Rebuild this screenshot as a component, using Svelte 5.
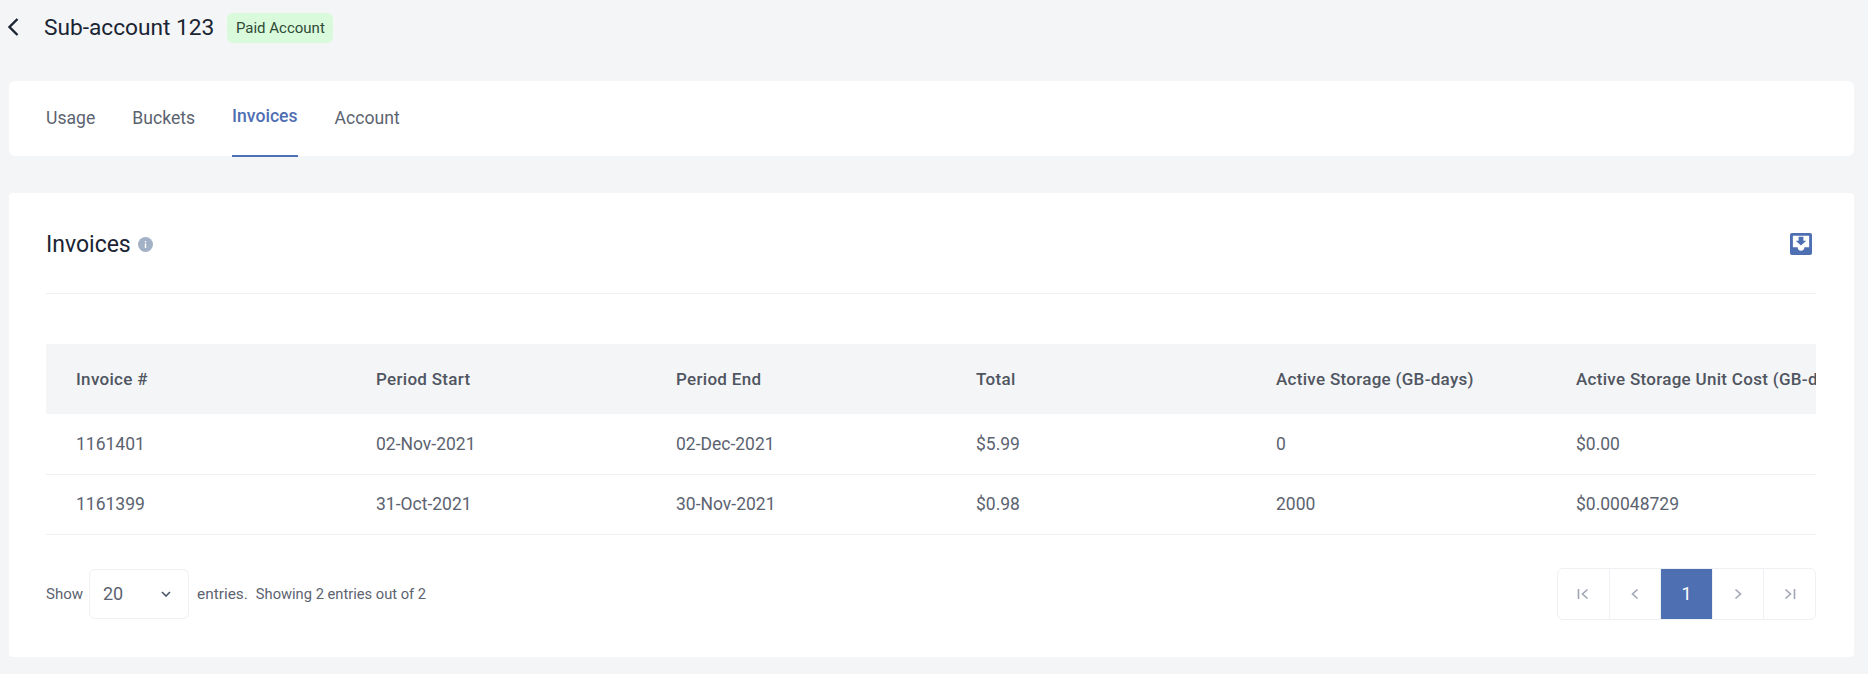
<script>
	const columns = ['Invoice #', 'Period Start', 'Period End', 'Total', 'Active Storage (GB-days)', 'Active Storage Unit Cost (GB-days)'];
	const rows = [
		['1161401', '02-Nov-2021', '02-Dec-2021', '$5.99', '0', '$0.00'],
		['1161399', '31-Oct-2021', '30-Nov-2021', '$0.98', '2000', '$0.00048729']
	];
	const tabs = ['Usage', 'Buckets', 'Invoices', 'Account'];
	let active = 'Invoices';
</script>

<div class="page">
	<header class="top">
		<svg class="back" width="14" height="20" viewBox="0 0 14 20"><path d="M11.5 2 L3.5 10 L11.5 18" fill="none" stroke="#1a2433" stroke-width="2.4" /></svg>
		<h1>Sub-account 123</h1>
		<span class="badge">Paid Account</span>
	</header>

	<nav class="tabs">
		{#each tabs as tab}
			<span class="tab" class:active={tab === active}>{tab}</span>
		{/each}
	</nav>

	<section class="card">
		<div class="card-head">
			<div class="title">
				<h2>Invoices</h2>
				<svg width="15" height="15" viewBox="0 0 15 15"><circle cx="7.5" cy="7.5" r="7.5" fill="#a3b1c6" /><rect x="6.8" y="6.4" width="1.4" height="4.6" fill="#fff" /><rect x="6.8" y="4" width="1.4" height="1.4" fill="#fff" /></svg>
			</div>
			<svg class="download" width="22" height="22" viewBox="0 0 23 23">
				<path fill="#4f6fb3" fill-rule="evenodd" d="M2 0 H21 A2 2 0 0 1 23 2 V21 A2 2 0 0 1 21 23 H2 A2 2 0 0 1 0 21 V2 A2 2 0 0 1 2 0 Z M3 3 V15 H8 A3.5 3.5 0 0 0 15 15 H20 V3 Z" />
				<path fill="#4f6fb3" d="M9 4 H14 V8 H17 L11.5 13 L6 8 H9 Z" />
			</svg>
		</div>

		<div class="table-wrap">
			<table>
				<thead>
					<tr>{#each columns as c}<th>{c}</th>{/each}</tr>
				</thead>
				<tbody>
					{#each rows as row}
						<tr>{#each row as cell}<td>{cell}</td>{/each}</tr>
					{/each}
				</tbody>
			</table>
		</div>

		<div class="footer">
			<div class="entries">
				<span>Show</span>
				<div class="select">
					<span>20</span>
					<svg width="10" height="6" viewBox="0 0 10 6"><path d="M1 1 L5 5 L9 1" fill="none" stroke="#4a5568" stroke-width="1.6" /></svg>
				</div>
				<span class="entries-word">entries.</span>
				<span class="showing">Showing 2 entries out of 2</span>
			</div>
			<div class="pager">
				<span class="page-btn"><svg width="12" height="12" viewBox="0 0 12 12"><path d="M1.5 1 V11 M10.5 1.5 L5.5 6 L10.5 10.5" fill="none" stroke="#a0a6b3" stroke-width="1.6" /></svg></span>
				<span class="page-btn"><svg width="8" height="12" viewBox="0 0 8 12"><path d="M6.5 1.5 L1.5 6 L6.5 10.5" fill="none" stroke="#a0a6b3" stroke-width="1.6" /></svg></span>
				<span class="page-btn current">1</span>
				<span class="page-btn"><svg width="8" height="12" viewBox="0 0 8 12"><path d="M1.5 1.5 L6.5 6 L1.5 10.5" fill="none" stroke="#a0a6b3" stroke-width="1.6" /></svg></span>
				<span class="page-btn"><svg width="12" height="12" viewBox="0 0 12 12"><path d="M10.5 1 V11 M1.5 1.5 L6.5 6 L1.5 10.5" fill="none" stroke="#a0a6b3" stroke-width="1.6" /></svg></span>
			</div>
		</div>
	</section>
</div>

<style>
	:global(body) { margin: 0; background: #f4f5f7; font-family: Roboto, "Liberation Sans", sans-serif; color: #4a5568; }
	.page { padding: 0 14px 17px 9px; height: 674px; box-sizing: border-box; overflow: hidden; }
	.top { height: 54px; display: flex; align-items: center; }
	.back { margin-left: -3px; margin-right: 24px; }
	h1 { margin: 0; font-size: 22.7px; font-weight: 400; color: #1a2433; }
	.badge { margin: 2px 0 0 13px; height: 30px; width: 106px; display: flex; align-items: center; justify-content: center; background: #d9fbdc; border-radius: 6px; font-size: 15px; color: #2f4a36; }
	.tabs { margin-top: 27px; height: 75px; background: #fff; border-radius: 6px; display: flex; gap: 37px; padding-left: 37px; }
	.tab { font-size: 17.6px; line-height: 75px; height: 75px; color: #5c6370; }
	.tab.active { color: #4f6fb3; font-weight: 500; line-height: 71px; height: 74px; border-bottom: 2px solid #4f6fb3; }
	.card { margin-top: 37px; height: 464px; box-sizing: border-box; background: #fff; border-radius: 4px; padding: 0 38px 0 37px; }
	.card-head { height: 101px; display: flex; align-items: center; justify-content: space-between; border-bottom: 1px solid #eff0f3; padding-top: 2px; box-sizing: border-box; }
	.title { display: flex; align-items: center; gap: 7px; }
	h2 { margin: 0; font-size: 23px; font-weight: 400; color: #1a2433; }
	.download { margin-right: 4px; }
	.table-wrap { margin-top: 50px; overflow: hidden; }
	table { border-collapse: collapse; table-layout: fixed; width: 1800px; }
	th { width: 300px; height: 70px; padding: 0 0 0 30px; box-sizing: border-box; background: #f4f5f7; text-align: left; font-size: 17px; letter-spacing: 0.3px; font-weight: 500; color: #4f5561; white-space: nowrap; overflow: visible; }
	td { height: 60px; padding: 0 0 0 30px; box-sizing: border-box; font-size: 17.5px; color: #5c6370; border-bottom: 1px solid #eff0f3; }
	.footer { margin-top: 33px; display: flex; align-items: center; justify-content: space-between; }
	.entries { display: flex; align-items: center; font-size: 15px; color: #5c6370; }
	.select { margin: 0 8px 0 6px; width: 100px; height: 50px; box-sizing: border-box; border: 1px solid #eff0f3; border-radius: 6px; padding: 0 17px 0 13px; display: flex; align-items: center; justify-content: space-between; font-size: 18px; }
	.entries-word { font-size: 15.4px; }
	.showing { margin-left: 8px; font-size: 14.7px; }
	.pager { display: flex; border: 1px solid #eff0f3; border-radius: 6px; overflow: hidden; }
	.page-btn { width: 50.6px; height: 50px; display: flex; align-items: center; justify-content: center; border-left: 1px solid #eff0f3; }
	.page-btn:first-child { border-left: none; }
	.page-btn.current { background: #4f6fb3; color: #fff; font-size: 18px; }
</style>
